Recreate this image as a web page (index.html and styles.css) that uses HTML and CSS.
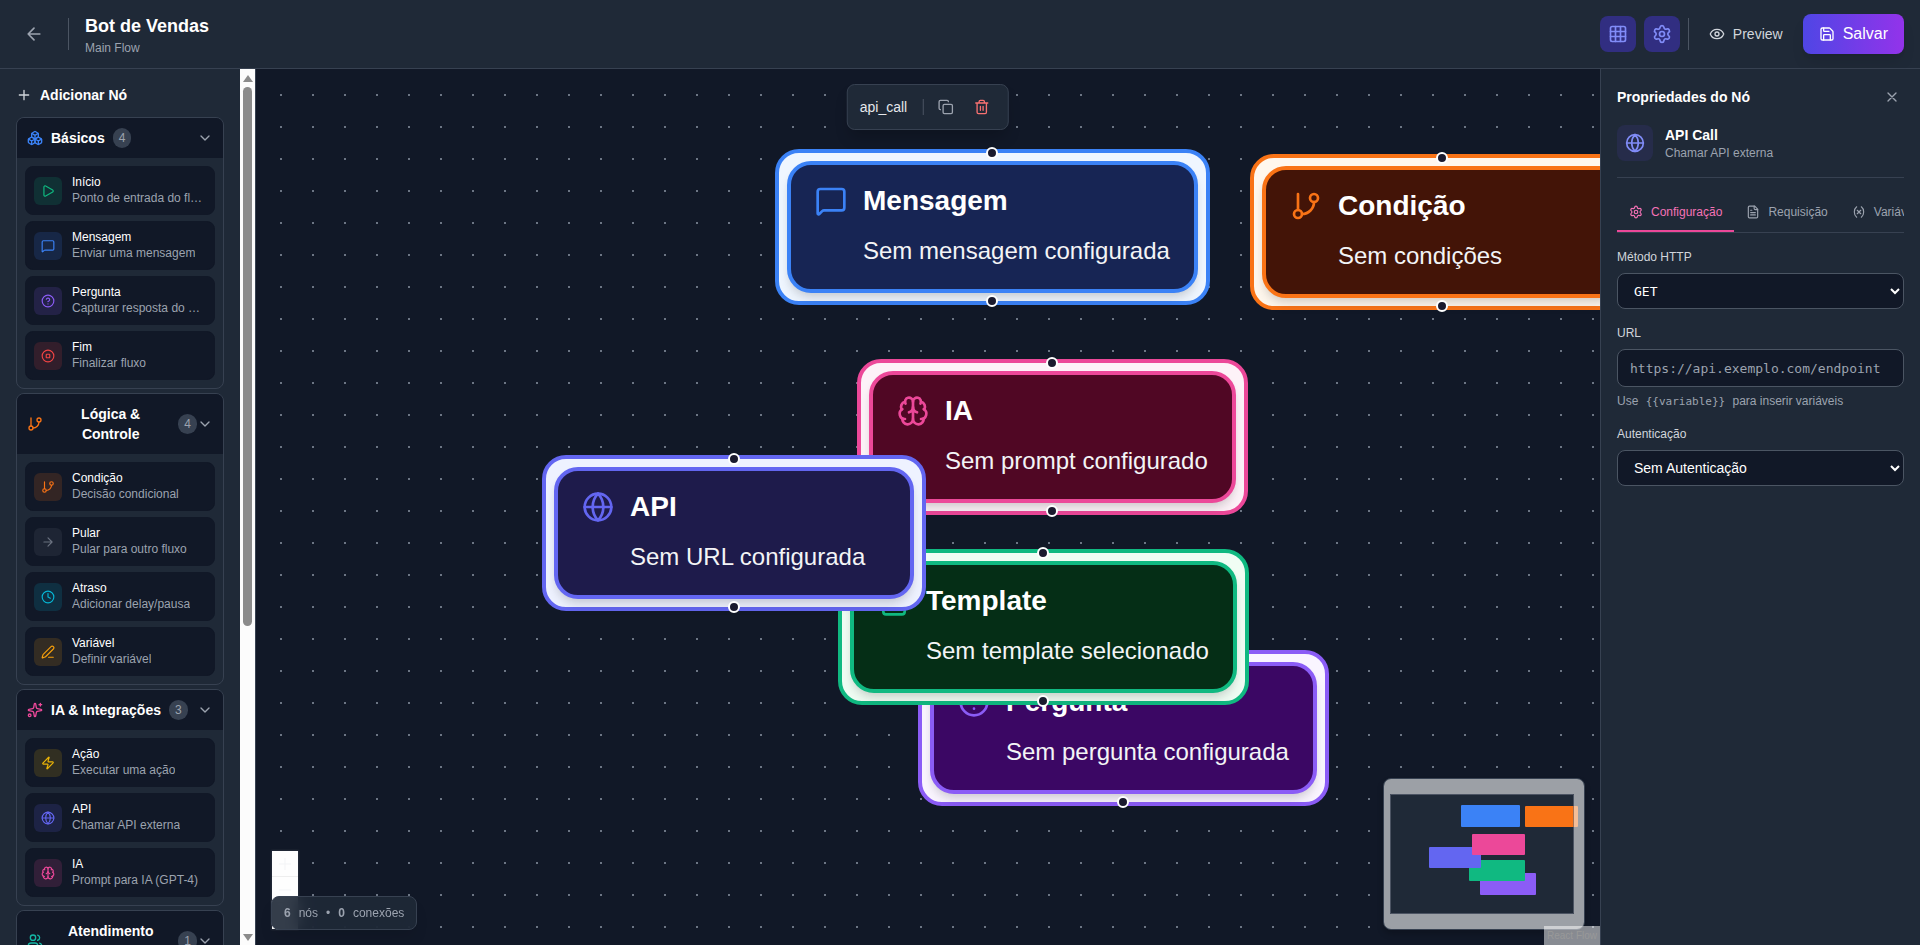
FILE: index.html
```html
<!DOCTYPE html>
<html lang="pt-BR">
<head>
<meta charset="utf-8">
<title>Bot de Vendas</title>
<link rel="stylesheet" href="styles.css">
</head>
<body>
<svg class="sprite" aria-hidden="true">
  <symbol id="arrow-left" viewBox="0 0 24 24"><path d="m12 19-7-7 7-7M19 12H5"/></symbol>
  <symbol id="arrow-right" viewBox="0 0 24 24"><path d="M5 12h14M12 5l7 7-7 7"/></symbol>
  <symbol id="plus" viewBox="0 0 24 24"><path d="M5 12h14M12 5v14"/></symbol>
  <symbol id="x" viewBox="0 0 24 24"><path d="M18 6 6 18M6 6l12 12"/></symbol>
  <symbol id="chevron" viewBox="0 0 24 24"><path d="m6 9 6 6 6-6"/></symbol>
  <symbol id="grid" viewBox="0 0 24 24"><rect x="3" y="3" width="18" height="18" rx="2"/><path d="M3 9h18M3 15h18M9 3v18M15 3v18"/></symbol>
  <symbol id="settings" viewBox="0 0 24 24"><path d="M9.671 4.136a2.34 2.34 0 0 1 4.659 0 2.34 2.34 0 0 0 3.319 1.915 2.34 2.34 0 0 1 2.33 4.033 2.34 2.34 0 0 0 0 3.831 2.34 2.34 0 0 1-2.33 4.033 2.34 2.34 0 0 0-3.319 1.915 2.34 2.34 0 0 1-4.659 0 2.34 2.34 0 0 0-3.32-1.915 2.34 2.34 0 0 1-2.33-4.033 2.34 2.34 0 0 0 0-3.831A2.34 2.34 0 0 1 6.35 6.051a2.34 2.34 0 0 0 3.319-1.915"/><circle cx="12" cy="12" r="3"/></symbol>
  <symbol id="eye" viewBox="0 0 24 24"><path d="M2.062 12.348a1 1 0 0 1 0-.696 10.75 10.75 0 0 1 19.876 0 1 1 0 0 1 0 .696 10.75 10.75 0 0 1-19.876 0"/><circle cx="12" cy="12" r="3"/></symbol>
  <symbol id="save" viewBox="0 0 24 24"><path d="M15.2 3a2 2 0 0 1 1.4.6l3.8 3.8a2 2 0 0 1 .6 1.4V19a2 2 0 0 1-2 2H5a2 2 0 0 1-2-2V5a2 2 0 0 1 2-2z"/><path d="M17 21v-7a1 1 0 0 0-1-1H8a1 1 0 0 0-1 1v7M7 3v4a1 1 0 0 0 1 1h7"/></symbol>
  <symbol id="boxes" viewBox="0 0 24 24"><path d="M2.97 12.92A2 2 0 0 0 2 14.63v3.24a2 2 0 0 0 .97 1.71l3 1.8a2 2 0 0 0 2.06 0L12 19v-5.5l-5-3-4.03 2.42Z"/><path d="m7 16.5-4.74-2.85M7 16.5l5-3M7 16.5v5.17"/><path d="M12 13.5V19l3.97 2.38a2 2 0 0 0 2.06 0l3-1.8a2 2 0 0 0 .97-1.71v-3.24a2 2 0 0 0-.97-1.71L17 10.5l-5 3Z"/><path d="m17 16.5-5-3M17 16.5l4.74-2.85M17 16.5v5.17"/><path d="M7.97 4.42A2 2 0 0 0 7 6.13v4.37l5 3 5-3V6.13a2 2 0 0 0-.97-1.71l-3-1.8a2 2 0 0 0-2.06 0l-3 1.8Z"/><path d="M12 8 7.26 5.15M12 8l4.74-2.85M12 13.5V8"/></symbol>
  <symbol id="play" viewBox="0 0 24 24"><path d="M5 5a2 2 0 0 1 3.008-1.728l11.997 6.998a2 2 0 0 1 .003 3.458l-12 7A2 2 0 0 1 5 19z"/></symbol>
  <symbol id="message" viewBox="0 0 24 24"><path d="M22 17a2 2 0 0 1-2 2H6.828a2 2 0 0 0-1.414.586l-2.202 2.202A.71.71 0 0 1 2 21.286V5a2 2 0 0 1 2-2h16a2 2 0 0 1 2 2z"/></symbol>
  <symbol id="help" viewBox="0 0 24 24"><circle cx="12" cy="12" r="10"/><path d="M9.09 9a3 3 0 0 1 5.83 1c0 2-3 3-3 3M12 17h.01"/></symbol>
  <symbol id="stop" viewBox="0 0 24 24"><circle cx="12" cy="12" r="10"/><rect x="9" y="9" width="6" height="6" rx="1"/></symbol>
  <symbol id="branch" viewBox="0 0 24 24"><path d="M6 3v12M18 9a9 9 0 0 1-9 9"/><circle cx="18" cy="6" r="3"/><circle cx="6" cy="18" r="3"/></symbol>
  <symbol id="clock" viewBox="0 0 24 24"><circle cx="12" cy="12" r="10"/><path d="M12 6v6l4 2"/></symbol>
  <symbol id="pen" viewBox="0 0 24 24"><path d="M13 21h8"/><path d="M21.174 6.812a1 1 0 0 0-3.986-3.987L3.842 16.174a2 2 0 0 0-.5.83l-1.321 4.352a.5.5 0 0 0 .623.622l4.353-1.32a2 2 0 0 0 .83-.497z"/></symbol>
  <symbol id="sparkles" viewBox="0 0 24 24"><path d="M11.017 2.814a1 1 0 0 1 1.966 0l1.051 5.558a2 2 0 0 0 1.594 1.594l5.558 1.051a1 1 0 0 1 0 1.966l-5.558 1.051a2 2 0 0 0-1.594 1.594l-1.051 5.558a1 1 0 0 1-1.966 0l-1.051-5.558a2 2 0 0 0-1.594-1.594l-5.558-1.051a1 1 0 0 1 0-1.966l5.558-1.051a2 2 0 0 0 1.594-1.594z"/><path d="M20 2v4M22 4h-4"/><circle cx="4" cy="20" r="2"/></symbol>
  <symbol id="zap" viewBox="0 0 24 24"><path d="M4 14a1 1 0 0 1-.78-1.63l9.9-10.2a.5.5 0 0 1 .86.46l-1.92 6.02A1 1 0 0 0 13 10h7a1 1 0 0 1 .78 1.63l-9.9 10.2a.5.5 0 0 1-.86-.46l1.92-6.02A1 1 0 0 0 11 14z"/></symbol>
  <symbol id="globe" viewBox="0 0 24 24"><circle cx="12" cy="12" r="10"/><path d="M12 2a14.5 14.5 0 0 0 0 20 14.5 14.5 0 0 0 0-20M2 12h20"/></symbol>
  <symbol id="brain" viewBox="0 0 24 24"><path d="M12 18V5"/><path d="M15 13a4.17 4.17 0 0 1-3-4 4.17 4.17 0 0 1-3 4"/><path d="M17.598 6.5A3 3 0 1 0 12 5a3 3 0 1 0-5.598 1.5"/><path d="M17.997 5.125a4 4 0 0 1 2.526 5.77"/><path d="M18 18a4 4 0 0 0 2-7.464"/><path d="M19.967 17.483A4 4 0 1 1 12 18a4 4 0 1 1-7.967-.517"/><path d="M6 18a4 4 0 0 1-2-7.464"/><path d="M6.003 5.125a4 4 0 0 0-2.526 5.77"/></symbol>
  <symbol id="users" viewBox="0 0 24 24"><path d="M16 21v-2a4 4 0 0 0-4-4H6a4 4 0 0 0-4 4v2M16 3.128a4 4 0 0 1 0 7.744M22 21v-2a4 4 0 0 0-3-3.87"/><circle cx="9" cy="7" r="4"/></symbol>
  <symbol id="copy" viewBox="0 0 24 24"><rect x="8" y="8" width="14" height="14" rx="2"/><path d="M4 16c-1.1 0-2-.9-2-2V4c0-1.1.9-2 2-2h10c1.1 0 2 .9 2 2"/></symbol>
  <symbol id="trash" viewBox="0 0 24 24"><path d="M3 6h18M19 6v14c0 1-1 2-2 2H7c-1 0-2-1-2-2V6M8 6V4c0-1 1-2 2-2h4c1 0 2 1 2 2v2M10 11v6M14 11v6"/></symbol>
  <symbol id="file" viewBox="0 0 24 24"><path d="M15 2H6a2 2 0 0 0-2 2v16a2 2 0 0 0 2 2h12a2 2 0 0 0 2-2V7Z"/><path d="M14 2v4a2 2 0 0 0 2 2h4M10 9H8M16 13H8M16 17H8"/></symbol>
  <symbol id="variable" viewBox="0 0 24 24"><path d="M8 21s-4-3-4-9 4-9 4-9M16 3s4 3 4 9-4 9-4 9M15 9l-6 6M9 9l6 6"/></symbol>
</svg>

<div class="app">
  <header class="topbar">
    <button class="icon-button" aria-label="Voltar"><svg class="icon icon-20"><use href="#arrow-left"/></svg></button>
    <span class="divider divider-back"></span>
    <div class="heading">
      <h1>Bot de Vendas</h1>
      <p>Main Flow</p>
    </div>
    <div class="actions">
      <button class="icon-button active" aria-label="Grade"><svg class="icon icon-20"><use href="#grid"/></svg></button>
      <button class="icon-button active" aria-label="Propriedades"><svg class="icon icon-20"><use href="#settings"/></svg></button>
      <span class="divider"></span>
      <button class="preview"><svg class="icon icon-16"><use href="#eye"/></svg>Preview</button>
      <button class="save"><svg class="icon icon-16"><use href="#save"/></svg>Salvar</button>
    </div>
  </header>

  <div class="workspace">
    <aside class="sidebar">
      <div class="palette">
        <h2 class="palette-title"><svg class="icon icon-16"><use href="#plus"/></svg>Adicionar Nó</h2>
        <div class="categories">
          <section class="category">
            <button class="category-head"><span class="category-label"><svg class="icon icon-16 blue"><use href="#boxes"/></svg><span class="category-name">Básicos</span><span class="count">4</span></span><svg class="icon icon-16 chevron"><use href="#chevron"/></svg></button>
            <div class="category-body">
              <div class="item"><span class="tile green"><svg class="icon icon-14"><use href="#play"/></svg></span><div class="item-text"><p class="item-name">Início</p><p class="item-desc">Ponto de entrada do fluxo</p></div></div>
              <div class="item"><span class="tile blue"><svg class="icon icon-14"><use href="#message"/></svg></span><div class="item-text"><p class="item-name">Mensagem</p><p class="item-desc">Enviar uma mensagem</p></div></div>
              <div class="item"><span class="tile violet"><svg class="icon icon-14"><use href="#help"/></svg></span><div class="item-text"><p class="item-name">Pergunta</p><p class="item-desc">Capturar resposta do usuário</p></div></div>
              <div class="item"><span class="tile red"><svg class="icon icon-14"><use href="#stop"/></svg></span><div class="item-text"><p class="item-name">Fim</p><p class="item-desc">Finalizar fluxo</p></div></div>
            </div>
          </section>
          <section class="category">
            <button class="category-head"><span class="category-label"><svg class="icon icon-16 orange"><use href="#branch"/></svg><span class="category-name">Lógica &amp; Controle</span><span class="count">4</span></span><svg class="icon icon-16 chevron"><use href="#chevron"/></svg></button>
            <div class="category-body">
              <div class="item"><span class="tile orange"><svg class="icon icon-14"><use href="#branch"/></svg></span><div class="item-text"><p class="item-name">Condição</p><p class="item-desc">Decisão condicional</p></div></div>
              <div class="item"><span class="tile gray"><svg class="icon icon-14"><use href="#arrow-right"/></svg></span><div class="item-text"><p class="item-name">Pular</p><p class="item-desc">Pular para outro fluxo</p></div></div>
              <div class="item"><span class="tile cyan"><svg class="icon icon-14"><use href="#clock"/></svg></span><div class="item-text"><p class="item-name">Atraso</p><p class="item-desc">Adicionar delay/pausa</p></div></div>
              <div class="item"><span class="tile amber"><svg class="icon icon-14"><use href="#pen"/></svg></span><div class="item-text"><p class="item-name">Variável</p><p class="item-desc">Definir variável</p></div></div>
            </div>
          </section>
          <section class="category">
            <button class="category-head"><span class="category-label"><svg class="icon icon-16 pink"><use href="#sparkles"/></svg><span class="category-name">IA &amp; Integrações</span><span class="count">3</span></span><svg class="icon icon-16 chevron"><use href="#chevron"/></svg></button>
            <div class="category-body">
              <div class="item"><span class="tile yellow"><svg class="icon icon-14"><use href="#zap"/></svg></span><div class="item-text"><p class="item-name">Ação</p><p class="item-desc">Executar uma ação</p></div></div>
              <div class="item"><span class="tile indigo"><svg class="icon icon-14"><use href="#globe"/></svg></span><div class="item-text"><p class="item-name">API</p><p class="item-desc">Chamar API externa</p></div></div>
              <div class="item"><span class="tile pink"><svg class="icon icon-14"><use href="#brain"/></svg></span><div class="item-text"><p class="item-name">IA</p><p class="item-desc">Prompt para IA (GPT-4)</p></div></div>
            </div>
          </section>
          <section class="category">
            <button class="category-head"><span class="category-label"><svg class="icon icon-16 teal"><use href="#users"/></svg><span class="category-name">Atendimento Humano</span><span class="count">1</span></span><svg class="icon icon-16 chevron"><use href="#chevron"/></svg></button>
          </section>
        </div>
      </div>
      <div class="scrollbar" aria-hidden="true">
        <span class="scroll-arrow up"></span>
        <span class="scroll-track"><span class="scroll-thumb"></span></span>
        <span class="scroll-arrow down"></span>
      </div>
    </aside>

    <main class="canvas">
      <svg class="dots" aria-hidden="true"><defs><pattern id="dot-grid" x="24" y="25" width="32" height="32" patternUnits="userSpaceOnUse"><circle cx="1" cy="1" r="1"/></pattern></defs><rect width="100%" height="100%" fill="url(#dot-grid)"/></svg>

      <article class="node node-mensagem"><span class="handle top"></span><div class="node-card"><svg class="icon icon-32"><use href="#message"/></svg><h3>Mensagem</h3><p>Sem mensagem configurada</p></div><span class="handle bottom"></span></article>
      <article class="node node-condicao"><span class="handle top"></span><div class="node-card"><svg class="icon icon-32"><use href="#branch"/></svg><h3>Condição</h3><p>Sem condições</p></div><span class="handle bottom"></span></article>
      <article class="node node-ia"><span class="handle top"></span><div class="node-card"><svg class="icon icon-32"><use href="#brain"/></svg><h3>IA</h3><p>Sem prompt configurado</p></div><span class="handle bottom"></span></article>
      <article class="node node-pergunta"><span class="handle top"></span><div class="node-card"><svg class="icon icon-32"><use href="#help"/></svg><h3>Pergunta</h3><p>Sem pergunta configurada</p></div><span class="handle bottom"></span></article>
      <article class="node node-template"><span class="handle top"></span><div class="node-card"><svg class="icon icon-32"><use href="#file"/></svg><h3>Template</h3><p>Sem template selecionado</p></div><span class="handle bottom"></span></article>
      <article class="node node-api"><span class="handle top"></span><div class="node-card"><svg class="icon icon-32"><use href="#globe"/></svg><h3>API</h3><p>Sem URL configurada</p></div><span class="handle bottom"></span></article>

      <div class="node-toolbar">
        <span class="node-type">api_call</span>
        <span class="divider"></span>
        <button aria-label="Duplicar"><svg class="icon icon-16"><use href="#copy"/></svg></button>
        <button class="danger" aria-label="Excluir"><svg class="icon icon-16"><use href="#trash"/></svg></button>
      </div>

      <div class="zoom-controls">
        <button aria-label="Aproximar"><svg viewBox="0 0 12 12"><path d="M0 6h12M6 0v12"/></svg></button>
        <button aria-label="Afastar"><svg viewBox="0 0 12 12"><path d="M0 6h12"/></svg></button>
        <button aria-label="Ajustar"><svg viewBox="0 0 12 12"><path d="M1 4V1h3M8 1h3v3M11 8v3H8M4 11H1V8"/></svg></button>
      </div>
      <div class="status"><b>6</b><span>nós</span><span>•</span><b>0</b><span>conexões</span></div>

      <a class="attribution" href="#">React Flow</a>
      <div class="minimap">
        <svg viewBox="0 0 200 150" role="img" aria-label="Mini mapa">
          <rect x="96" y="94" width="56" height="22" rx="1" fill="#8b5cf6"/>
          <rect x="85" y="81" width="56" height="21" rx="1" fill="#10b981"/>
          <rect x="45" y="68" width="52" height="21" rx="1" fill="#6366f1"/>
          <rect x="88" y="55" width="53" height="21" rx="1" fill="#ec4899"/>
          <rect x="141" y="27" width="53" height="21" rx="1" fill="#f97316"/>
          <rect x="77" y="26" width="59" height="22" rx="1" fill="#3b82f6"/>
          <path d="M0 0h200v150H0zM6 15v120h184V15z" fill="#f0f0f0" fill-opacity=".6" fill-rule="evenodd"/>
          <path d="M6.500 15.500h183v119h-183z" fill="none" stroke="#6b7280" stroke-opacity=".6"/>
        </svg>
      </div>
    </main>

    <aside class="properties">
      <div class="properties-head"><h2>Propriedades do Nó</h2><button aria-label="Fechar"><svg class="icon icon-16"><use href="#x"/></svg></button></div>
      <div class="selected-node">
        <span class="selected-icon"><svg class="icon icon-20"><use href="#globe"/></svg></span>
        <div><h3>API Call</h3><p>Chamar API externa</p></div>
      </div>
      <div class="tabs" role="tablist">
        <button class="tab current" role="tab" aria-selected="true"><svg class="icon icon-14"><use href="#settings"/></svg>Configuração</button>
        <button class="tab" role="tab"><svg class="icon icon-14"><use href="#file"/></svg>Requisição</button>
        <button class="tab" role="tab"><svg class="icon icon-14"><use href="#variable"/></svg>Variáveis</button>
      </div>
      <form class="fields">
        <div class="field"><label for="method">Método HTTP</label><select id="method" class="mono"><option>GET</option><option>POST</option></select></div>
        <div class="field"><label for="url">URL</label><input id="url" class="mono" type="text" placeholder="https://api.exemplo.com/endpoint"><p class="hint">Use <code>{{variable}}</code> para inserir variáveis</p></div>
        <div class="field"><label for="auth">Autenticação</label><select id="auth"><option>Sem Autenticação</option></select></div>
      </form>
    </aside>
  </div>
</div>
</body>
</html>
```

FILE: styles.css
```css
* { box-sizing: border-box; margin: 0; padding: 0; }

body {
  font-family: "Liberation Sans", Arial, sans-serif;
  font-size: 14px;
  line-height: 20px;
  color: #fff;
  background: #111827;
}

button, select, input { font: inherit; color: inherit; }
button { border: 0; background: none; cursor: pointer; }
a { text-decoration: none; }

.sprite { position: absolute; width: 0; height: 0; }

.icon {
  display: block;
  fill: none;
  stroke: currentColor;
  stroke-width: 2;
  stroke-linecap: round;
  stroke-linejoin: round;
}
.icon-14 { width: 14px; height: 14px; }
.icon-16 { width: 16px; height: 16px; }
.icon-20 { width: 20px; height: 20px; }
.icon-32 { width: 32px; height: 32px; }

.blue { color: #3b82f6; }
.green { color: #10b981; }
.violet { color: #8b5cf6; }
.red { color: #ef4444; }
.orange { color: #f97316; }
.gray { color: #6b7280; }
.cyan { color: #06b6d4; }
.amber { color: #f59e0b; }
.yellow { color: #eab308; }
.indigo { color: #6366f1; }
.pink { color: #ec4899; }
.teal { color: #14b8a6; }

.app { display: flex; flex-direction: column; height: 100vh; overflow: hidden; }

/* Top bar */
.topbar {
  display: flex;
  align-items: center;
  gap: 16px;
  padding: 12px 16px;
  background: #1f2937;
  border-bottom: 1px solid #374151;
}
.icon-button { padding: 8px; border-radius: 8px; color: #9ca3af; }
.icon-button.active { background: #312e81; color: #818cf8; }
.divider { width: 1px; height: 32px; background: #4b5563; }
.heading h1 { font-size: 18px; line-height: 28px; }
.heading p { font-size: 12px; line-height: 16px; color: #9ca3af; }
.actions { display: flex; align-items: center; gap: 8px; margin-left: auto; }
.preview { display: flex; align-items: center; gap: 8px; padding: 8px 12px; color: #d1d5db; }
.save {
  display: flex;
  align-items: center;
  gap: 8px;
  padding: 8px 16px;
  font-size: 16px;
  line-height: 24px;
  border-radius: 8px;
  background: linear-gradient(90deg, #4f46e5, #9333ea);
  box-shadow: 0 10px 15px -3px rgba(0, 0, 0, .1), 0 4px 6px -4px rgba(0, 0, 0, .1);
}

.workspace { display: flex; flex: 1; min-height: 0; }

/* Node palette */
.sidebar { display: flex; flex: none; width: 256px; border-right: 1px solid #374151; background: #1f2937; }
.palette { flex: 1; min-width: 0; padding: 16px; overflow: hidden; }
.palette-title { display: flex; align-items: center; gap: 8px; font-size: 14px; margin-bottom: 12px; }
.palette-title .icon { color: #d1d5db; }
.categories { display: flex; flex-direction: column; gap: 4px; }
.category { border: 1px solid #374151; border-radius: 8px; overflow: hidden; }
.category-head {
  display: flex;
  align-items: center;
  justify-content: space-between;
  width: 100%;
  padding: 10px;
  background: #111827;
}
.category-label { display: flex; align-items: center; gap: 8px; }
.category-label .icon { flex: none; }
.category-name { font-weight: 700; }
.category .chevron { flex: none; color: #9ca3af; }
.count { padding: 2px 6px; border-radius: 10px; background: #374151; color: #9ca3af; font-size: 12px; line-height: 16px; }
.category-body { display: flex; flex-direction: column; gap: 6px; padding: 8px; }
.item {
  display: flex;
  align-items: center;
  gap: 10px;
  padding: 8px;
  border: 1px solid #111827;
  border-radius: 8px;
  background: #111827;
  font-size: 12px;
}
.tile { position: relative; display: grid; place-items: center; flex: none; width: 28px; height: 28px; border-radius: 6px; overflow: hidden; }
.tile::before { content: ""; position: absolute; inset: 0; background: currentColor; opacity: .15; }
.item-text { min-width: 0; }
.item-name { line-height: 15px; }
.item-desc { line-height: 16px; color: #9ca3af; white-space: nowrap; overflow: hidden; text-overflow: ellipsis; }

.scrollbar { display: flex; flex-direction: column; align-items: center; width: 15px; padding: 6px 0 4px; background: #fcfcfc; }
.scroll-arrow { border: 5px solid transparent; border-top-width: 0; border-bottom: 7px solid #8b8b8b; }
.scroll-arrow.down { border-bottom-width: 0; border-top: 7px solid #8b8b8b; }
.scroll-track { flex: 1; padding: 5px 0; }
.scroll-thumb { display: block; width: 9px; height: 64%; border-radius: 5px; background: #8b8b8b; }

/* Flow canvas */
.canvas { position: relative; flex: 1; min-width: 0; overflow: hidden; background: #111827; }
.dots { position: absolute; width: 100%; height: 100%; }
.dots circle { fill: #8b94a3; }

.node { position: absolute; padding: 8px; border: 4px solid var(--accent); border-radius: 24px; background: var(--tint); }
.node-card {
  display: grid;
  grid-template-columns: 32px auto;
  column-gap: 16px;
  row-gap: 8px;
  align-items: center;
  justify-content: start;
  min-width: 360px;
  padding: 16px 24px;
  border: 4px solid var(--accent);
  border-radius: 24px;
  background: var(--fill);
  box-shadow: 0 8px 12px -2px rgba(0, 0, 0, .12), 0 4px 8px -4px rgba(0, 0, 0, .1);
}
.node-card .icon { color: var(--accent); }
.node-card h3 { font-size: 28px; line-height: 40px; }
.node-card p { grid-column: 2; font-size: 24px; line-height: 44px; color: #f3f4f6; white-space: nowrap; }
.handle { position: absolute; left: 50%; width: 12px; height: 12px; margin-left: -6px; border: 2px solid #fff; border-radius: 50%; background: #1a1a2e; }
.handle.top { top: -6px; }
.handle.bottom { bottom: -6px; }

.node-mensagem { left: 519px; top: 80px; --accent: #3b82f6; --tint: #eff6ff; --fill: #172554; }
.node-condicao { left: 994px; top: 85px; --accent: #f97316; --tint: #fff7ed; --fill: #431407; }
.node-ia { left: 601px; top: 290px; --accent: #ec4899; --tint: #fdf2f8; --fill: #500724; }
.node-pergunta { left: 662px; top: 581px; --accent: #8b5cf6; --tint: #faf5ff; --fill: #3b0764; }
.node-template { left: 582px; top: 480px; --accent: #10b981; --tint: #f0fdf4; --fill: #052e16; }
.node-api { left: 286px; top: 386px; --accent: #6366f1; --tint: #eef2ff; --fill: #1e1b4b; }

.node-toolbar {
  position: absolute;
  top: 15px;
  left: 50%;
  transform: translateX(-50%);
  display: flex;
  align-items: center;
  gap: 8px;
  padding: 8px 12px;
  border: 1px solid #374151;
  border-radius: 8px;
  background: #1f2937;
  box-shadow: 0 10px 15px -3px rgba(0, 0, 0, .2);
}
.node-toolbar .divider { height: 16px; background: #4b5563; }
.node-type { margin-right: 8px; color: #e5e7eb; }
.node-toolbar button { padding: 6px; color: #9ca3af; }
.node-toolbar .danger { color: #f87171; }

.zoom-controls { position: absolute; left: 16px; bottom: 16px; display: flex; flex-direction: column; box-shadow: 0 0 2px 1px rgba(255, 255, 255, .1); }
.zoom-controls button { display: grid; place-items: center; width: 26px; height: 26px; border-bottom: 1px solid #eee; background: #fefefe; }
.zoom-controls button:last-child { border-bottom: 0; }
.zoom-controls svg { width: 12px; height: 12px; fill: none; stroke: #f3f4f6; }
.status {
  position: absolute;
  left: 15px;
  bottom: 15px;
  display: flex;
  gap: 8px;
  padding: 8px 12px;
  border: 1px solid #374151;
  border-radius: 8px;
  background: rgba(31, 41, 55, .9);
  backdrop-filter: blur(8px);
  box-shadow: 0 10px 15px -3px rgba(0, 0, 0, .1);
  color: #9ca3af;
  font-size: 12px;
  line-height: 16px;
}
.minimap { position: absolute; right: 15px; bottom: 15px; border: 1px solid #374151; border-radius: 8px; background: #1f2937; overflow: hidden; box-shadow: 0 4px 6px rgba(0, 0, 0, .2); }
.minimap svg { display: block; width: 200px; height: 150px; }
.attribution { position: absolute; z-index: 1; right: 0; bottom: 0; padding: 2px 3px; background: rgba(255, 255, 255, .5); color: #999; font-size: 10px; line-height: 15px; }

/* Properties */
.properties { flex: none; width: 320px; padding: 16px; border-left: 1px solid #374151; background: #1f2937; }
.properties-head { display: flex; align-items: center; justify-content: space-between; margin-bottom: 16px; }
.properties-head h2 { font-size: 14px; }
.properties-head button { padding: 4px; color: #9ca3af; }
.selected-node { display: flex; align-items: center; gap: 12px; padding-bottom: 16px; border-bottom: 1px solid #374151; }
.selected-icon { display: grid; place-items: center; width: 36px; height: 36px; border-radius: 8px; background: #262c4a; color: #818cf8; }
.selected-node h3 { font-size: 14px; line-height: 20px; }
.selected-node p { font-size: 12px; line-height: 16px; color: #9ca3af; }
.tabs { display: flex; margin-top: 16px; border-bottom: 1px solid #374151; overflow: hidden; }
.tab { display: flex; flex: none; align-items: center; gap: 8px; padding: 10px 12px; border-bottom: 2px solid transparent; color: #9ca3af; font-size: 12px; line-height: 16px; }
.tab.current { border-color: #ec4899; color: #f472b6; }
.fields { display: flex; flex-direction: column; gap: 16px; padding-top: 16px; }
.field { display: flex; flex-direction: column; }
.field label { margin-bottom: 8px; color: #d1d5db; font-size: 12px; line-height: 16px; }
.field select, .field input { width: 100%; border: 1px solid #4b5563; border-radius: 8px; background: #111827; color: #fff; }
.field select { height: 36px; padding: 8px 0 8px 12px; }
.field input { height: 38px; padding: 8px 12px; }
.field .mono { font-family: "DejaVu Sans Mono", monospace; font-size: 13px; }
.field input::placeholder { color: #9ca3af; }
.hint { margin-top: 6px; color: #9ca3af; font-size: 12px; line-height: 16px; }
.hint code { padding: 0 4px; font-family: "DejaVu Sans Mono", monospace; font-size: 11px; }
```
